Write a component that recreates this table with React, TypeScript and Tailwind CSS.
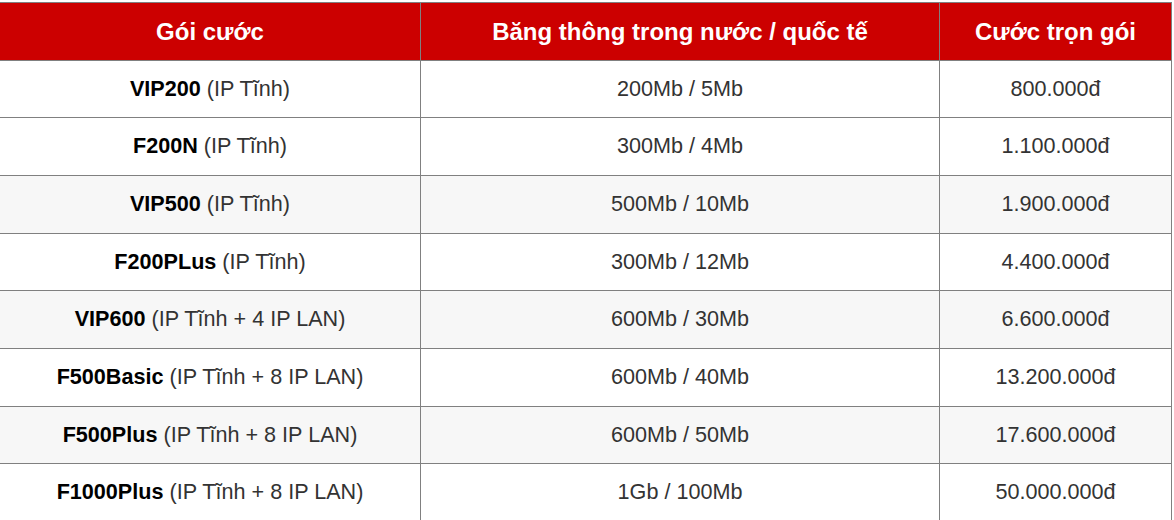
const rows = [
  { name: 'VIP200', ip: 'IP Tĩnh', bw: '200Mb / 5Mb', price: '800.000đ', h: 'h-[57px]', bg: 'bg-white' },
  { name: 'F200N', ip: 'IP Tĩnh', bw: '300Mb / 4Mb', price: '1.100.000đ', h: 'h-[58px]', bg: 'bg-white' },
  { name: 'VIP500', ip: 'IP Tĩnh', bw: '500Mb / 10Mb', price: '1.900.000đ', h: 'h-[58px]', bg: 'bg-[#f7f7f7]' },
  { name: 'F200PLus', ip: 'IP Tĩnh', bw: '300Mb / 12Mb', price: '4.400.000đ', h: 'h-[57px]', bg: 'bg-white' },
  { name: 'VIP600', ip: 'IP Tĩnh + 4 IP LAN', bw: '600Mb / 30Mb', price: '6.600.000đ', h: 'h-[58px]', bg: 'bg-[#f7f7f7]' },
  { name: 'F500Basic', ip: 'IP Tĩnh + 8 IP LAN', bw: '600Mb / 40Mb', price: '13.200.000đ', h: 'h-[58px]', bg: 'bg-white' },
  { name: 'F500Plus', ip: 'IP Tĩnh + 8 IP LAN', bw: '600Mb / 50Mb', price: '17.600.000đ', h: 'h-[57px]', bg: 'bg-[#f7f7f7]' },
  { name: 'F1000Plus', ip: 'IP Tĩnh + 8 IP LAN', bw: '1Gb / 100Mb', price: '50.000.000đ', h: 'h-[58px]', bg: 'bg-white' },
];

export default function App() {
  return (
    <div className="min-h-[520px] bg-white font-[Liberation_Sans,Arial,sans-serif] overflow-hidden">
      <div className="mt-[2px] -ml-px w-[1173px] border-x border-t border-[#808080]">
        {/* Header */}
        <div className="grid h-[58px] grid-cols-[421px_519px_231px] border-b border-[#808080] bg-[#cc0000] text-[24px] font-bold text-white">
          <div className="flex items-center justify-center border-r border-[#808080]">Gói cước</div>
          <div className="flex items-center justify-center border-r border-[#808080]">Băng thông trong nước / quốc tế</div>
          <div className="flex items-center justify-center">Cước trọn gói</div>
        </div>

        {rows.map((r) => (
          <div
            key={r.name}
            className={`grid grid-cols-[421px_519px_231px] border-b border-[#808080] text-[21.6px] text-[#333] ${r.h} ${r.bg}`}
          >
            <div className="flex items-center justify-center border-r border-[#808080]">
              <span>
                <b className="text-black">{r.name}</b> ({r.ip})
              </span>
            </div>
            <div className="flex items-center justify-center border-r border-[#808080]">{r.bw}</div>
            <div className="flex items-center justify-center">{r.price}</div>
          </div>
        ))}
      </div>
    </div>
  );
}
